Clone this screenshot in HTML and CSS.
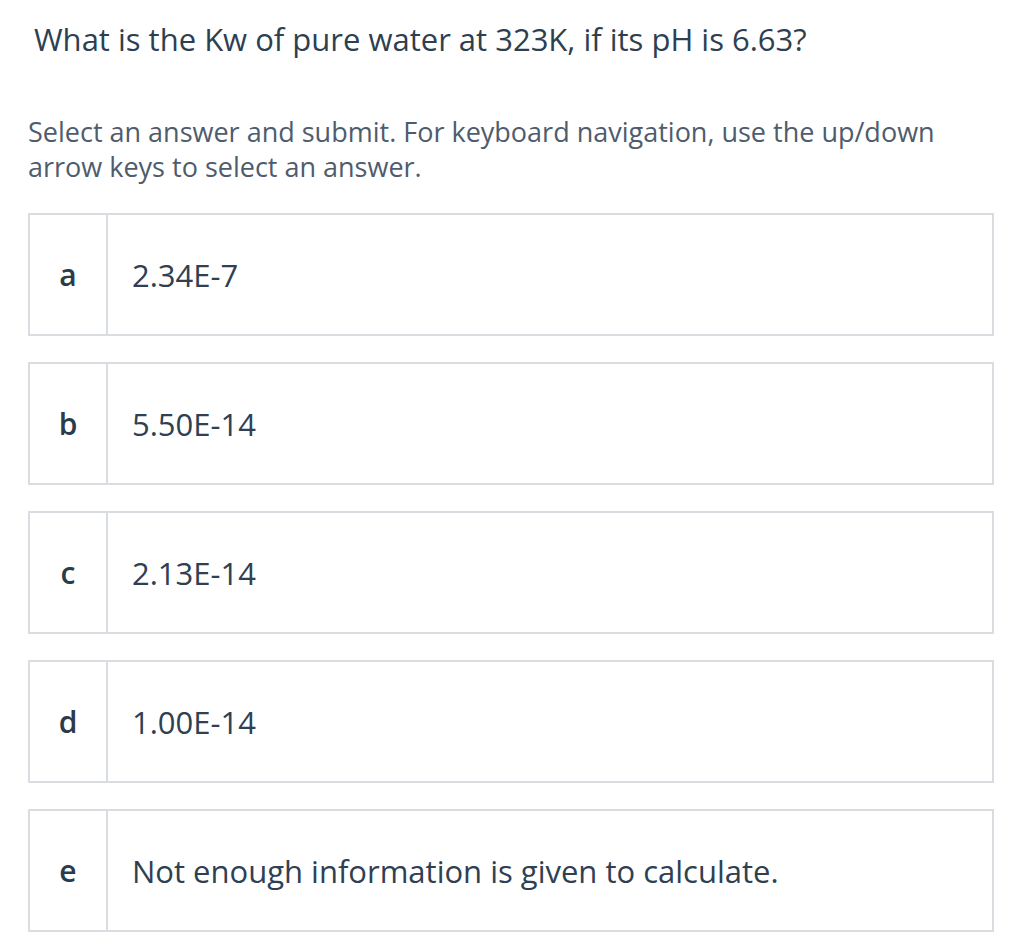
FILE: index.html
```html
<!DOCTYPE html>
<html lang="en">
<head>
<meta charset="utf-8">
<title>Question</title>
<link rel="stylesheet" href="styles.css">
</head>
<body>
<main class="question">
  <h1 class="question-title">What is the Kw of pure water at 323K, if its pH is 6.63?</h1>
  <p class="instructions">Select an answer and submit. For keyboard navigation, use the up/down arrow keys to select an answer.</p>
  <ul class="answers" role="radiogroup">
    <li class="answer" role="radio" aria-checked="false"><span class="answer-letter">a</span><span class="answer-text">2.34E-7</span></li>
    <li class="answer" role="radio" aria-checked="false"><span class="answer-letter">b</span><span class="answer-text">5.50E-14</span></li>
    <li class="answer" role="radio" aria-checked="false"><span class="answer-letter">c</span><span class="answer-text">2.13E-14</span></li>
    <li class="answer" role="radio" aria-checked="false"><span class="answer-letter">d</span><span class="answer-text">1.00E-14</span></li>
    <li class="answer" role="radio" aria-checked="false"><span class="answer-letter">e</span><span class="answer-text">Not enough information is given to calculate.</span></li>
  </ul>
</main>
</body>
</html>
```
FILE: styles.css
```css
html, body {
  margin: 0;
  padding: 0;
  background: #ffffff;
}

body {
  font-family: "Open Sans", "Noto Sans", sans-serif;
}

.question {
  padding: 21px 23px 0 28px;
}

.question-title {
  margin: 0;
  padding-left: 6px;
  font-size: 31px;
  line-height: 37px;
  font-weight: 400;
  color: #2e3f51;
}

.instructions {
  margin: 56px 0 0 0;
  font-size: 27px;
  line-height: 35px;
  color: #4e5c6d;
}

.answers {
  list-style: none;
  margin: 29px 0 0 0;
  padding: 0;
  display: flex;
  flex-direction: column;
  gap: 26px;
}

.answer {
  display: flex;
  height: 123px;
  box-sizing: border-box;
  border: 2px solid #d9dde2;
  background: #ffffff;
}

.answer-letter {
  flex: 0 0 76px;
  display: flex;
  align-items: center;
  justify-content: center;
  border-right: 2px solid #d9dde2;
  font-size: 30px;
  font-weight: 600;
  color: #2c3b4a;
}

.answer-text {
  flex: 1;
  display: flex;
  align-items: center;
  padding-left: 24px;
  font-size: 31px;
  color: #2f4052;
}
```
